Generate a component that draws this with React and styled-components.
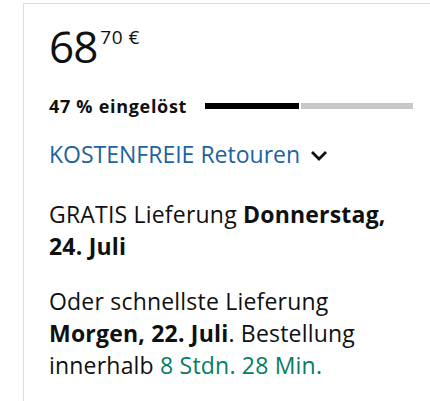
import React from "react";
import styled, { createGlobalStyle } from "styled-components";

const GlobalStyle = createGlobalStyle`
  body {
    margin: 0;
    background: #fff;
    font-family: "Open Sans", "Noto Sans", sans-serif;
    color: #0f1111;
  }
`;

const deal = {
  euros: "68",
  cents: "70",
  claimed: 46,
};

export default function App() {
  return (
    <>
      <GlobalStyle />
      <Card>
        <Price>
          <Whole>{deal.euros}</Whole>
          <Fraction>{deal.cents} €</Fraction>
        </Price>
        <ClaimRow>
          <ClaimText>47 % eingelöst</ClaimText>
          <Track>
            <Fill style={{ width: `${deal.claimed}%` }} />
          </Track>
        </ClaimRow>
        <ReturnsLink>
          KOSTENFREIE Retouren
          <Chevron viewBox="0 0 18 11" aria-hidden="true">
            <path d="M2 2 L9 9 L16 2" />
          </Chevron>
        </ReturnsLink>
        <Delivery>
          GRATIS Lieferung <b>Donnerstag, 24. Juli</b>
        </Delivery>
        <Delivery>
          Oder schnellste Lieferung <b>Morgen, 22. Juli</b>. Bestellung
          innerhalb <Countdown>8 Stdn. 28 Min.</Countdown>
        </Delivery>
      </Card>
    </>
  );
}

const Card = styled.div`
  margin: 3px 0 0 23px;
  height: 398px;
  box-sizing: border-box;
  border-top: 1px solid #dddddd;
  border-left: 1px solid #dddddd;
  padding: 20px 17px 0 25px;
`;

const Price = styled.div`
  display: flex;
  align-items: flex-start;
  line-height: 1;
`;

const Whole = styled.span`
  font-size: 44px;
  letter-spacing: -1px;
`;

const Fraction = styled.span`
  font-size: 19px;
  letter-spacing: 0.5px;
  margin-top: 4px;
  margin-left: 3px;
`;

const ClaimRow = styled.div`
  display: flex;
  align-items: center;
  gap: 18px;
  margin-top: 25px;
  height: 25px;
`;

const ClaimText = styled.span`
  font-size: 18px;
  font-weight: 700;
  letter-spacing: 0.7px;
  white-space: nowrap;
`;

const Track = styled.div`
  flex: 1;
  height: 6px;
  background: #c8c8c8;
`;

const Fill = styled.div`
  height: 100%;
  background: #000;
  border-right: 2px solid #fff;
  box-sizing: border-box;
`;

const ReturnsLink = styled.div`
  display: flex;
  align-items: center;
  gap: 10px;
  margin-top: 21px;
  font-size: 23px;
  line-height: 31px;
  color: #2162a1;
`;

const Chevron = styled.svg`
  width: 18px;
  height: 11px;
  margin-top: 2px;
  fill: none;
  stroke: #0f1111;
  stroke-width: 2.8;
`;

const Delivery = styled.p`
  max-width: 340px;
  margin: 28px 0 0;
  font-size: 23px;
  letter-spacing: 0.2px;
  line-height: 32px;
  & + & {
    margin-top: 23px;
  }
`;

const Countdown = styled.span`
  color: #067d62;
`;
